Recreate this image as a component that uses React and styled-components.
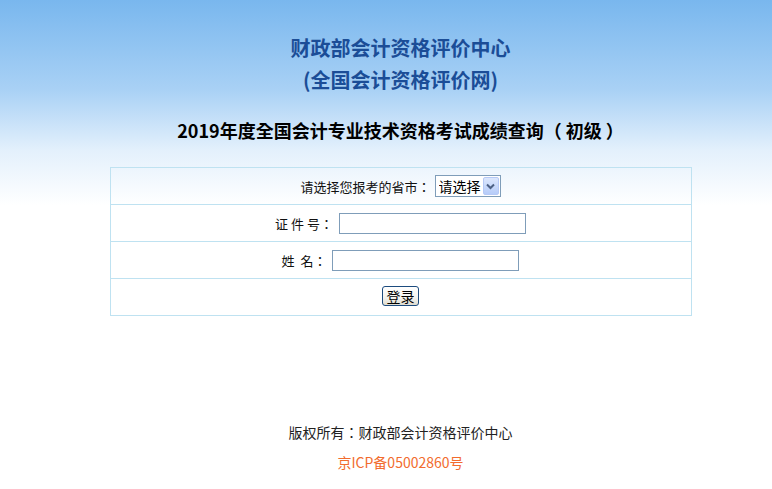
import React from "react";
import styled, { createGlobalStyle } from "styled-components";

const Global = createGlobalStyle`
  html, body { margin: 0; padding: 0; }
  body {
    background: linear-gradient(to bottom, #79b7ee 0px, #a9d1f5 90px, #e3f0fc 150px, #ffffff 205px) no-repeat;
    background-color: #fff;
    font-family: "Noto Sans CJK SC", "Microsoft YaHei", sans-serif;
    min-height: 489px;
  }
`;

const Page = styled.div`
  display: flex;
  flex-direction: column;
  align-items: center;
  padding-top: 32px;
  padding-left: 29px;
`;

const OrgTitle = styled.h1`
  margin: 0;
  font-size: 20px;
  line-height: 32px;
  font-weight: 700;
  color: #1b4d97;
  text-align: center;
`;

const ExamTitle = styled.h2`
  margin: 20px 0 0;
  font-size: 18px;
  line-height: 28px;
  font-weight: 700;
  color: #000;
  text-align: center;
  white-space: nowrap;
  font-family: "Noto Sans CJK TC", "Noto Sans CJK SC", sans-serif;
`;

const Paren = styled.span`
  display: inline-block;
  margin: ${(p) => (p.$open ? "0 4px 0 0" : "0 0 0 4px")};
`;

const Form = styled.form`
  margin: 23px 0 0;
  width: 580px;
  border: 1px solid #bfe2f1;
  display: flex;
  flex-direction: column;
`;

const Row = styled.div`
  height: 36px;
  display: flex;
  align-items: center;
  justify-content: center;
  gap: ${(p) => p.$gap || 6}px;
  border-top: ${(p) => (p.$first ? "none" : "1px solid #bfe2f1")};
  font-size: 13px;
  color: #111;
  font-family: "Noto Sans CJK TC", "Noto Sans CJK SC", sans-serif;
`;

const Label = styled.label`
  white-space: pre;
`;

const TextInput = styled.input`
  box-sizing: border-box;
  width: 187px;
  height: 21px;
  border: 1px solid #7f9db9;
  background: #fff;
  padding: 0 2px;
  font-size: 13px;
  outline: none;
`;

const SelectBox = styled.span`
  display: inline-flex;
  align-items: center;
  box-sizing: border-box;
  width: 66px;
  height: 22px;
  border: 1px solid #7f9db9;
  background: #fff;
  padding: 1px;
`;

const Select = styled.select`
  appearance: none;
  -webkit-appearance: none;
  border: none;
  background: transparent;
  font-family: "Noto Sans CJK SC", sans-serif;
  font-size: 14px;
  color: #000;
  padding: 0 0 0 2px;
  height: 18px;
  line-height: 18px;
  outline: none;
  flex: 1;
  min-width: 0;
`;

const Arrow = styled.span`
  width: 16px;
  height: 18px;
  box-sizing: border-box;
  border: 1px solid #b6c9f6;
  border-radius: 2px;
  background: linear-gradient(to bottom, #dce7fd, #b6ccf9);
  display: flex;
  align-items: center;
  justify-content: center;
  pointer-events: none;
`;

const Button = styled.button`
  box-sizing: border-box;
  width: 37px;
  height: 20px;
  padding: 0;
  border: 1px solid #1c4b7e;
  border-radius: 3px;
  background: linear-gradient(to bottom, #ffffff 0%, #f4f3ee 60%, #dedbcf 100%);
  font-family: "Noto Sans CJK SC", sans-serif;
  font-size: 14px;
  line-height: 16px;
  color: #000;
  margin-top: -3px;
`;

const Footer = styled.footer`
  margin-top: 101px;
  display: flex;
  flex-direction: column;
  align-items: center;
  font-size: 14px;
  line-height: 30px;
`;

const Copyright = styled.div`
  color: #222;
  font-family: "Noto Sans CJK TC", "Noto Sans CJK SC", sans-serif;
`;

const Icp = styled.a`
  color: #f26c2e;
  text-decoration: none;
  font-family: "Noto Sans CJK SC", sans-serif;
`;

export default function App() {
  return (
    <>
      <Global />
      <Page>
        <OrgTitle>
          财政部会计资格评价中心
          <br />
          (全国会计资格评价网)
        </OrgTitle>
        <ExamTitle>
          2019年度全国会计专业技术资格考试成绩查询<Paren $open>（</Paren>初级<Paren>）</Paren>
        </ExamTitle>
        <Form onSubmit={(e) => e.preventDefault()}>
          <Row $first $gap={4}>
            <Label>请选择您报考的省市：</Label>
            <SelectBox>
              <Select defaultValue="">
                <option value="">请选择</option>
              </Select>
              <Arrow>
                <svg width="9" height="7" viewBox="0 0 9 7">
                  <path d="M1 1.5 L4.5 5 L8 1.5" fill="none" stroke="#4d6185" strokeWidth="2" />
                </svg>
              </Arrow>
            </SelectBox>
          </Row>
          <Row $gap={6}>
            <Label>证 件 号：</Label>
            <TextInput type="text" />
          </Row>
          <Row $gap={6}>
            <Label>姓  名：</Label>
            <TextInput type="text" />
          </Row>
          <Row>
            <Button type="submit">登录</Button>
          </Row>
        </Form>
        <Footer>
          <Copyright>版权所有：财政部会计资格评价中心</Copyright>
          <Icp href="#">京ICP备05002860号</Icp>
        </Footer>
      </Page>
    </>
  );
}
